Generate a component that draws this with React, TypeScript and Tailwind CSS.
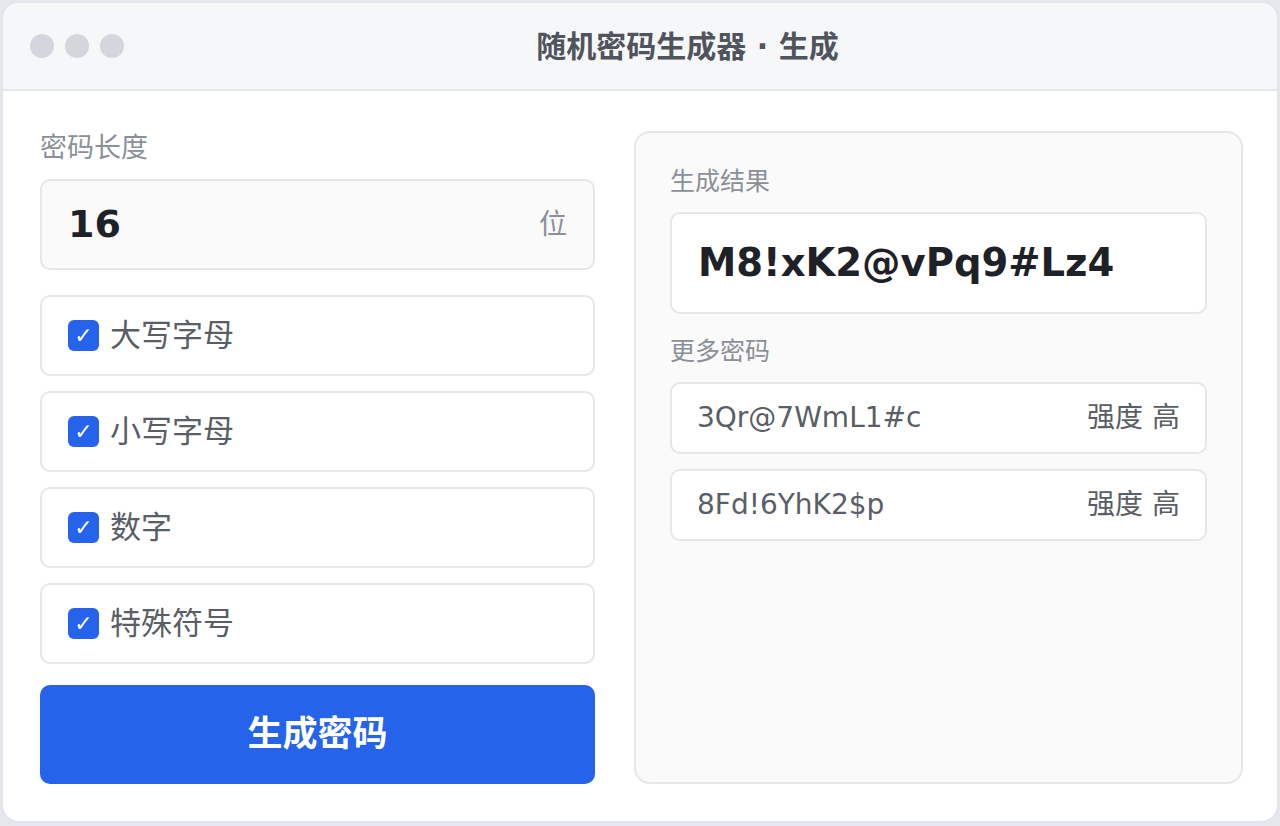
import React from 'react';

const FONT = { fontFamily: '"DejaVu Sans", "Noto Sans CJK SC", sans-serif' };

const options = ['大写字母', '小写字母', '数字', '特殊符号'];
const more = ['3Qr@7WmL1#c', '8Fd!6YhK2$p'];

const Check: React.FC<{ label: string }> = ({ label }) => (
  <div className="flex h-[81px] items-center gap-[11px] rounded-[10px] border-2 border-[#e5e7eb] bg-white pl-[26px]">
    <span className="flex h-[31px] w-[31px] items-center justify-center rounded-[6px] bg-[#2563eb] text-[22px] leading-none text-white">
      ✓
    </span>
    <span className="text-[31px] leading-none text-[#5a5e66]">{label}</span>
  </div>
);

const App: React.FC = () => {
  return (
    <div className="h-[826px] w-[1280px] overflow-hidden bg-[#e6e7ec]" style={FONT}>
      <div className="ml-px mt-px flex h-[822px] w-[1278px] flex-col overflow-hidden rounded-[18px] border-2 border-[#e3e5ea] bg-white">
        {/* title bar */}
        <div className="flex h-[88px] shrink-0 items-center border-b-2 border-[#e5e7eb] bg-[#f6f7f9] pl-[27px] pr-[30px]">
          <div className="flex gap-[11px]">
            <span className="h-[24px] w-[24px] rounded-full bg-[#d4d6dd]" />
            <span className="h-[24px] w-[24px] rounded-full bg-[#d4d6dd]" />
            <span className="h-[24px] w-[24px] rounded-full bg-[#d4d6dd]" />
          </div>
          <div className="flex-1 pl-[4px] text-center text-[30px] font-bold text-[#50545c]">
            随机密码生成器 · 生成
          </div>
        </div>

        {/* body */}
        <div className="grid flex-1 grid-cols-[555px_609px] gap-[39px] pb-[38px] pl-[37px] pt-[40px]">
          <div className="flex flex-col">
            <div className="text-[27px] leading-[34px] text-[#8b8f98]">密码长度</div>
            <div className="mt-[14px] flex h-[91px] items-center justify-between rounded-[10px] border-2 border-[#e5e7eb] bg-[#fafafa] px-[26px]">
              <span className="text-[38px] font-bold text-[#1f2128]">16</span>
              <span className="text-[28px] text-[#8b8f98]">位</span>
            </div>
            <div className="mt-[25px] flex flex-col gap-[15px]">
              {options.map(o => (
                <Check key={o} label={o} />
              ))}
            </div>
            <button className="mt-[21px] h-[99px] rounded-[10px] bg-[#2563eb] text-[35px] font-bold text-white">
              生成密码
            </button>
          </div>

          <div className="flex flex-col rounded-[16px] border-2 border-[#e5e7eb] bg-[#fafafa] px-[34px] pt-[33px]">
            <div className="text-[25px] leading-[32px] text-[#8b8f98]">生成结果</div>
            <div className="mt-[14px] flex h-[102px] items-center rounded-[10px] border-2 border-[#e5e7eb] bg-white pl-[26px]">
              <span className="text-[38.5px] font-bold text-[#1f2128]">M8!xK2@vPq9#Lz4</span>
            </div>
            <div className="mt-[22px] text-[25px] leading-[32px] text-[#8b8f98]">更多密码</div>
            <div className="mt-[14px] flex flex-col gap-[15px]">
              {more.map(p => (
                <div
                  key={p}
                  className="flex h-[72px] items-center justify-between rounded-[10px] border-2 border-[#e5e7eb] bg-white px-[25px] text-[28px] text-[#5a5e66]"
                >
                  <span>{p}</span>
                  <span>强度 高</span>
                </div>
              ))}
            </div>
          </div>
        </div>
      </div>
    </div>
  );
};

export default App;
